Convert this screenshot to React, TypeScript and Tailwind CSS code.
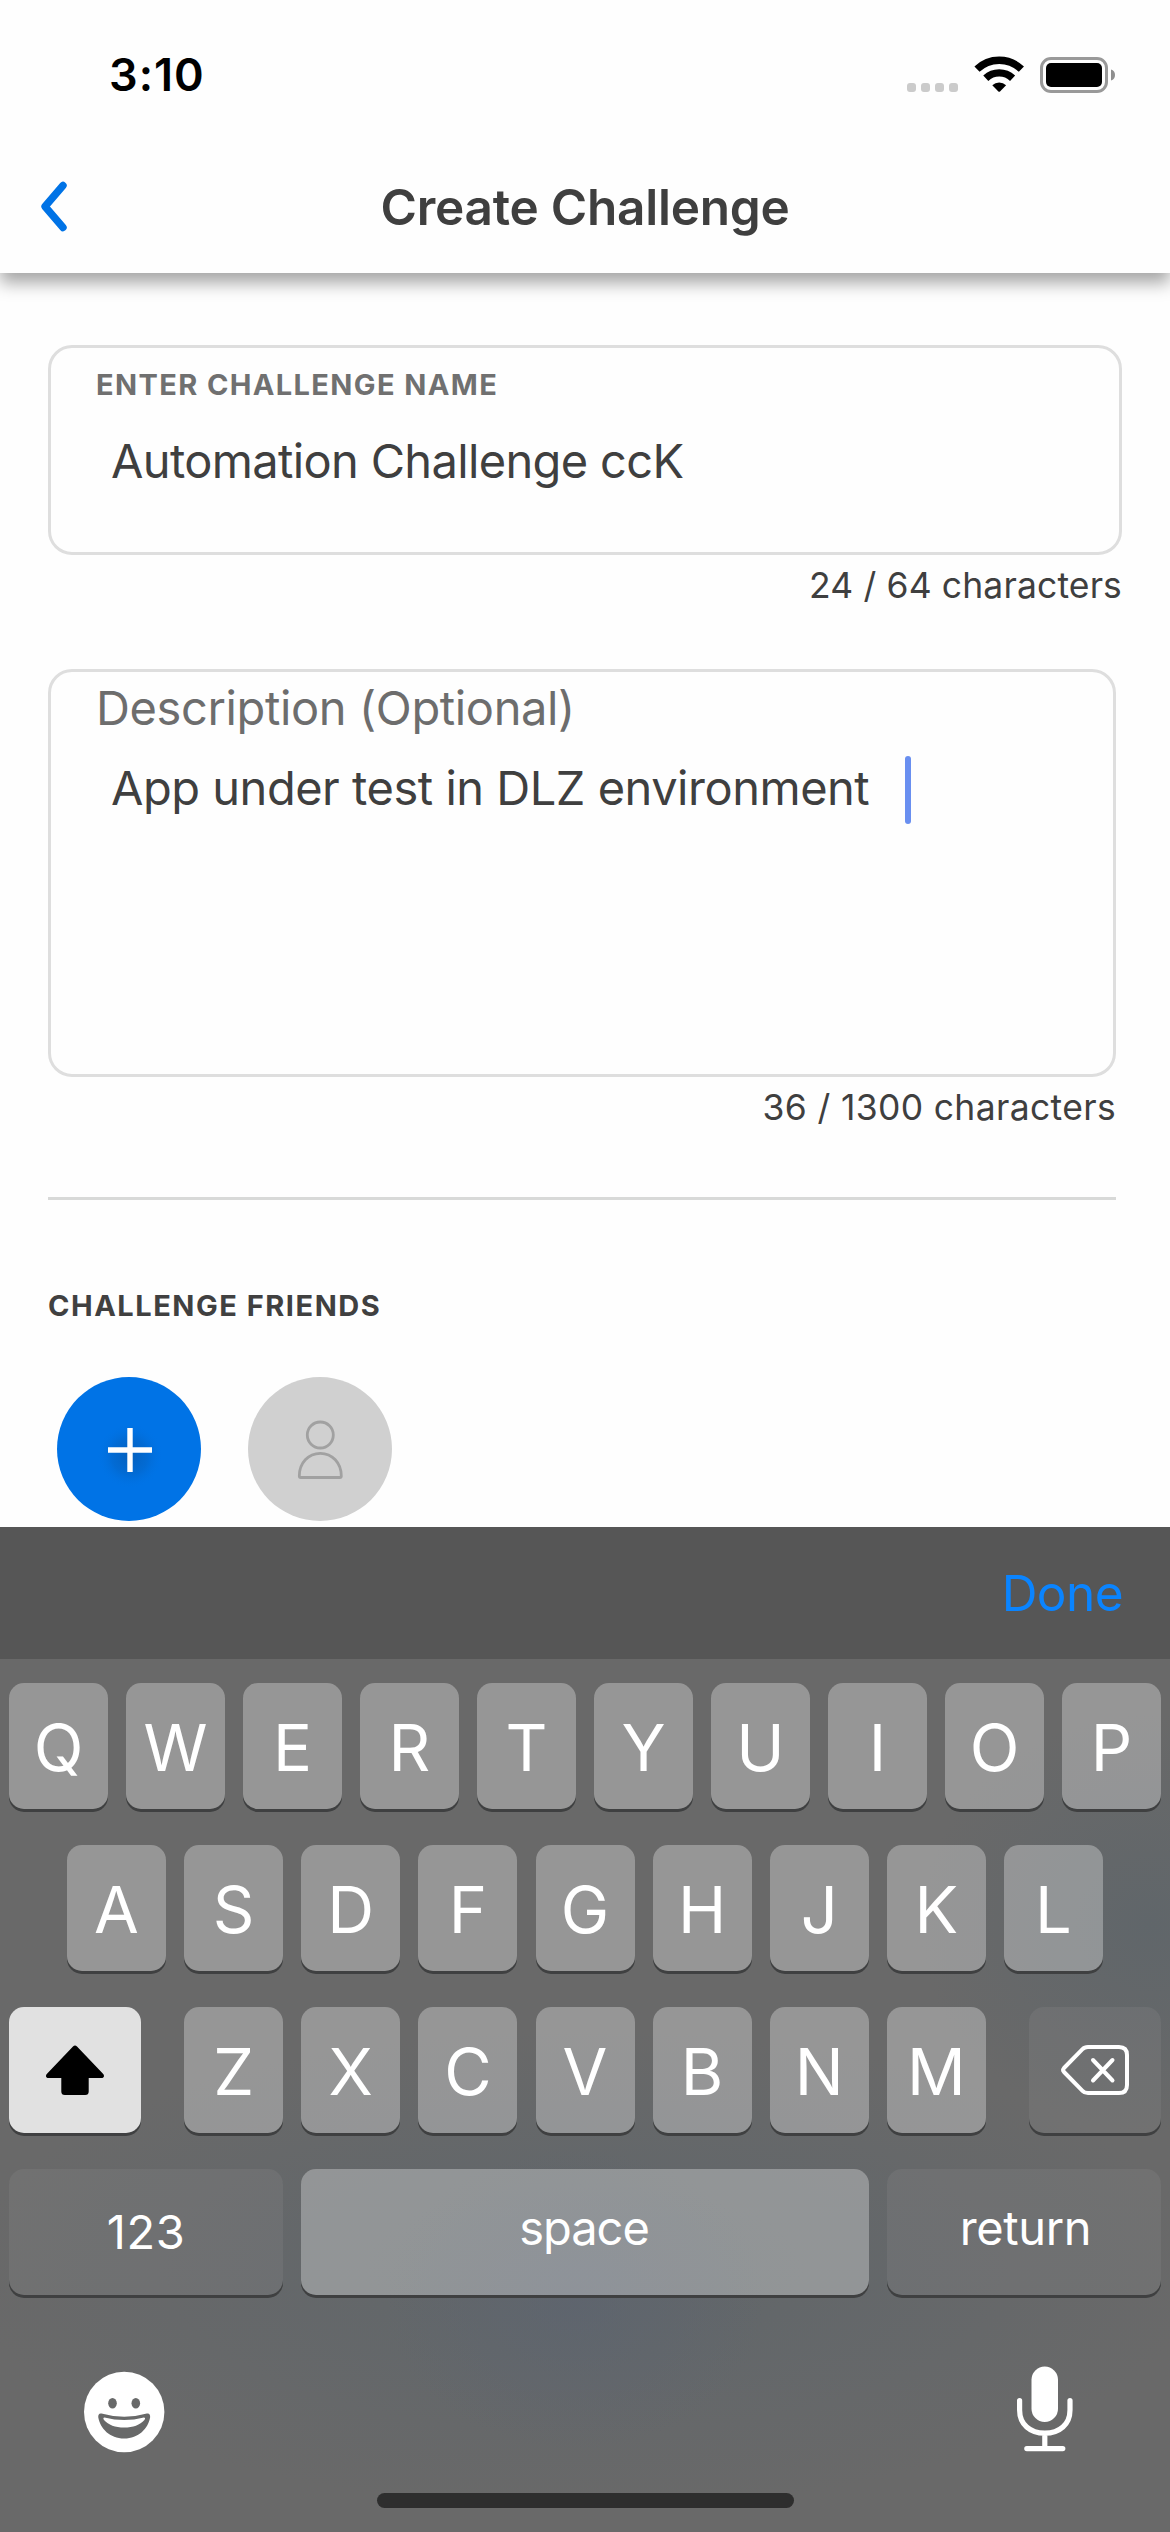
import type { ReactNode } from "react";

function StatusBar() {
  return (
    <div className="flex h-[149px] items-center justify-between pl-[109px] pr-[55px] text-black">
      <span className="text-[45px] font-semibold leading-[60px] tracking-[1px]">3:10</span>
      <svg width="208" height="40" viewBox="907 54 208 40" className="block">
        <g fill="#cbcbcb">
          <rect x="907" y="82" width="9" height="9" rx="3" />
          <rect x="921" y="82" width="9" height="9" rx="3" />
          <rect x="935" y="82" width="9" height="9" rx="3" />
          <rect x="949" y="82" width="9" height="9" rx="3" />
        </g>
        <g fill="none" stroke="#000" strokeWidth="7.4">
          <path d="M977 68.2a32 32 0 0 1 44.4 0" />
          <path d="M985.8 77.2a19.5 19.5 0 0 1 26.8 0" />
        </g>
        <path d="M992.3 84.2a10 10 0 0 1 13.8 0l-6.1 6.2q-.8.8-1.6 0z" fill="#000" />
        <rect x="1041.5" y="57.5" width="65" height="33" rx="9.5" fill="none" stroke="#999" strokeWidth="3" />
        <rect x="1046" y="62" width="56" height="24" rx="5" fill="#000" />
        <path d="M1111 68.5q4 1.2 4 5.5t-4 5.5z" fill="#8f8f8f" />
      </svg>
    </div>
  );
}

function Header() {
  return (
    <header className="relative z-10 h-[273px] bg-[#fefefe] shadow-[0_10px_16px_rgba(0,0,0,0.35)]">
      <StatusBar />
      <div className="grid h-[115px] grid-cols-[120px_1fr_120px] items-center">
        <svg width="30" height="54" viewBox="0 0 30 54" className="ml-[39px] block" fill="none" stroke="#0073e6" strokeWidth="7.4" strokeLinecap="round" strokeLinejoin="round">
          <path d="M24 5.500L6 26.500l18 21" />
        </svg>
        <h1 className="text-center text-[49.5px] font-semibold leading-[60px] tracking-[-0.24px] text-[#3f3f3f]">Create Challenge</h1>
      </div>
    </header>
  );
}

function NameField() {
  return (
    <section className="w-[1074px]">
      <div className="h-[210px] rounded-[24px] border-[3px] border-[#dedede] pl-[45px] pt-[19px]">
        <p className="text-[29px] font-bold leading-[35px] tracking-[1.38px] text-[#707070]">ENTER CHALLENGE NAME</p>
        <p className="ml-[15px] mt-[31px] text-[47px] leading-[56px] tracking-[-0.65px]">Automation Challenge ccK</p>
      </div>
      <p className="mt-[10px] text-right text-[35.5px] leading-[41px] tracking-[0.13px]">24 / 64 characters</p>
    </section>
  );
}

function DescriptionField() {
  return (
    <section className="mt-[63px] w-[1068px]">
      <div className="h-[408px] rounded-[24px] border-[3px] border-[#dedede] pl-[45px] pt-[8px]">
        <p className="text-[47px] leading-[56px] tracking-[-0.37px] text-[#6d6d6d]">Description (Optional)</p>
        <div className="ml-[15px] mt-[20px] flex h-[68px] items-start">
          <p className="mt-[3px] text-[47px] leading-[57px] tracking-[-0.48px]">App under test in DLZ environment</p>
          <span className="ml-[36px] h-[68px] w-[6px] rounded-full bg-[#698ff0]" />
        </div>
      </div>
      <p className="mt-[11px] text-right text-[35.5px] leading-[40px] tracking-[0.34px]">36 / 1300 characters</p>
    </section>
  );
}

function Friends() {
  return (
    <section>
      <h2 className="mt-[87px] text-[29px] font-bold leading-[37px] tracking-[1.52px] text-[#404040]">CHALLENGE FRIENDS</h2>
      <div className="mt-[53px] flex gap-[47px] pl-[9px]">
        <button className="block size-[144px] rounded-full bg-[#0073e6]">
          <svg width="144" height="144" viewBox="0 0 144 144" className="block">
            <defs>
              <radialGradient id="plus-shade">
                <stop offset="0" stopColor="#0b4f96" stopOpacity="0.5" />
                <stop offset="0.55" stopColor="#0b4f96" stopOpacity="0.22" />
                <stop offset="1" stopColor="#0073e6" stopOpacity="0" />
              </radialGradient>
            </defs>
            <circle cx="73" cy="79" r="33" fill="url(#plus-shade)" />
            <path d="M73 51v44M51 73h44" stroke="#fff" strokeWidth="5.4" />
          </svg>
        </button>
        <div className="size-[144px] rounded-full bg-[#d0d0d0]">
          <svg width="144" height="144" viewBox="0 0 144 144" className="block" fill="none" stroke="#a1a1a1" strokeWidth="2.8">
            <circle cx="72.3" cy="58" r="13" />
            <path d="M51.3 99c0-13 9-22.700 21-22.700s21 9.700 21 22.700q0 1.500-1.500 1.500h-39q-1.500 0-1.500-1.500z" />
          </svg>
        </div>
      </div>
    </section>
  );
}

function Key({ children, width = "w-[99px]", tone = "bg-white/30", text = "pt-[3px] text-[65px] leading-none" }: { children: ReactNode; width?: string; tone?: string; text?: string }) {
  return (
    <button className={`flex h-[126px] shrink-0 items-center justify-center rounded-[15px] text-white shadow-[0_3px_0_#3f4041] ${width} ${tone} ${text}`}>
      {children}
    </button>
  );
}

const labelText = "text-[47px] leading-none";

function Keyboard() {
  return (
    <div className="h-[1005px]">
      <div className="flex h-[132px] items-center justify-end bg-[#565656] pr-[47px]">
        <button className="text-[49.5px] leading-[60px] tracking-[-0.55px] text-[#0a84ff]">Done</button>
      </div>
      <div className="h-[873px] bg-[#696969] bg-[radial-gradient(ellipse_190px_150px_at_575px_640px,#5d6470b3_0%,transparent_100%),radial-gradient(ellipse_620px_240px_at_585px_610px,#606669_0%,#63676acc_50%,transparent_100%),radial-gradient(ellipse_230px_210px_at_1150px_265px,#60666a_0%,transparent_100%)] px-[9px] pt-[24px]">
        <div className="flex flex-col gap-[36px]">
          <div className="flex justify-center gap-[18px]">
            {[..."QWERTYUIOP"].map((k) => <Key key={k}>{k}</Key>)}
          </div>
          <div className="flex justify-center gap-[18.125px]">
            {[..."ASDFGHJKL"].map((k) => <Key key={k}>{k}</Key>)}
          </div>
          <div className="flex justify-between">
            <Key width="w-[132px]" tone="bg-[#e1e1e1]" text="">
              <svg width="60" height="54" viewBox="0 0 60 54" fill="#000">
                <path d="M28 3.400q2-2 4 0l26 27.300c2 2.300.8 4.300-1.500 4.300H43.700v13.500q0 3.500-3.500 3.500H19.800q-3.500 0-3.500-3.500V35H3.500C1.200 35 0 33 2 30.700z" />
              </svg>
            </Key>
            <div className="flex gap-[18.125px]">
              {[..."ZXCVBNM"].map((k) => <Key key={k}>{k}</Key>)}
            </div>
            <Key width="w-[132px]" tone="bg-white/6" text="">
              <svg width="70" height="54" viewBox="0 0 70 54" fill="none" stroke="#fff" strokeWidth="4" strokeLinecap="round" strokeLinejoin="round">
                <path d="M28 4h31q8 0 8 8v30q0 8-8 8H28q-3.500 0-5.500-2.200L4 29q-1.800-2 0-4L22.500 6.200Q24.500 4 28 4z" />
                <path d="M33 17l19.500 20.500m0-20.500l-19.500 20.500" />
              </svg>
            </Key>
          </div>
          <div className="flex gap-[18px]">
            <Key width="w-[274px]" tone="bg-white/6" text={`${labelText} tracking-[0.6px] pb-[2px]`}>123</Key>
            <Key width="w-[568px]" text={`${labelText} tracking-[-1px] pr-[2px] pb-[9px]`}>space</Key>
            <Key width="w-[274px]" tone="bg-white/6" text={`${labelText} tracking-[-0.4px] pl-[3px] pb-[9px]`}>return</Key>
          </div>
        </div>
        <div className="mt-[68px] flex items-start justify-between pl-[74px] pr-[86px]">
          <svg width="82" height="96" viewBox="83 2363 82 96" className="block">
            <circle cx="124.200" cy="2412" r="40.200" fill="#fff" />
            <g fill="#686969">
              <ellipse cx="112.500" cy="2403.200" rx="4.300" ry="5.200" />
              <ellipse cx="135.800" cy="2403.200" rx="4.300" ry="5.200" />
              <path d="M101.500 2413.500q22.700 6.500 45.400 0c2.500-.6 3.600 1.500 3.200 4-2 11-11.500 21-25.900 21s-23.900-10-25.900-21c-.4-2.500.7-4.600 3.200-4z" />
            </g>
            <path d="M104.500 2417.500q19.700 5.200 39.400 0 2 .4.500 2.500c-4.500 5-11.200 7.500-20.200 7.500s-15.700-2.500-20.200-7.500q-1.500-2.100.5-2.500z" fill="#fff" />
          </svg>
          <svg width="60" height="96" viewBox="1015 2363 60 96" className="block">
            <rect x="1031.500" y="2366.500" width="26.500" height="55.500" rx="13.250" fill="#fff" />
            <path d="M1019.600 2400.500v9.500c0 14.500 10.500 23.200 25.200 23.200s25.200-8.700 25.200-23.200v-9.500M1044.800 2434v14M1026.800 2448.600h36" fill="none" stroke="#fff" strokeWidth="5.200" strokeLinecap="round" />
          </svg>
        </div>
        <div className="mx-auto mt-[34px] h-[15px] w-[417px] rounded-full bg-[#2e2e2e]" />
      </div>
    </div>
  );
}

export default function App() {
  return (
    <div className="h-[2532px] w-[1170px] overflow-hidden bg-[#fefefe] font-[Inter,sans-serif] text-[#3f3f3f]">
      <Header />
      <main className="h-[1254px] overflow-hidden px-[48px] pt-[72px]">
        <NameField />
        <DescriptionField />
        <div className="mt-[69px] h-[3px] w-[1068px] bg-[#d8d9d8]" />
        <Friends />
      </main>
      <Keyboard />
    </div>
  );
}
